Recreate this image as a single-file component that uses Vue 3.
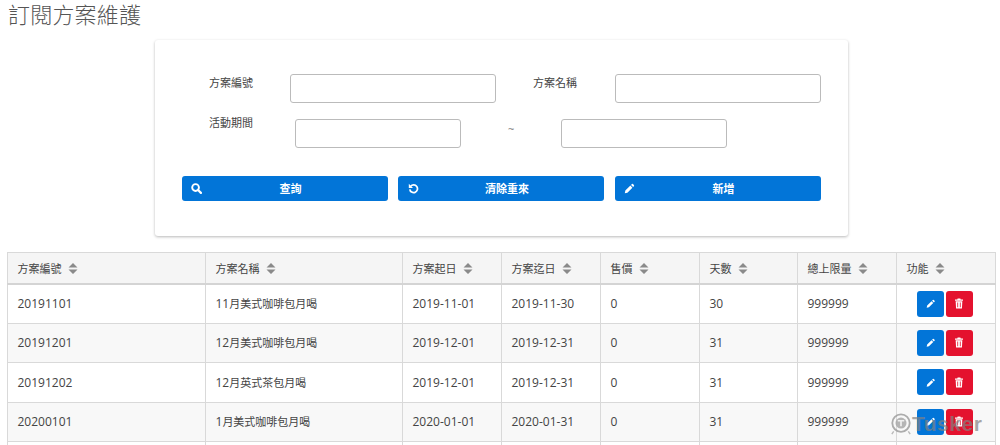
<script setup>
const columns = ['方案編號', '方案名稱', '方案起日', '方案迄日', '售價', '天數', '總上限量', '功能']
const widths = [198, 197, 99, 99, 99, 98, 99, 99]

const plans = [
  { id: '20191101', month: '11', name: '月美式咖啡包月喝', start: '2019-11-01', end: '2019-11-30', price: 0, days: 30, limit: 999999 },
  { id: '20191201', month: '12', name: '月美式咖啡包月喝', start: '2019-12-01', end: '2019-12-31', price: 0, days: 31, limit: 999999 },
  { id: '20191202', month: '12', name: '月英式茶包月喝', start: '2019-12-01', end: '2019-12-31', price: 0, days: 31, limit: 999999 },
  { id: '20200101', month: '1', name: '月美式咖啡包月喝', start: '2020-01-01', end: '2020-01-31', price: 0, days: 31, limit: 999999 },
]
const pencil = 'M1 13l.7-3.300 6.400-6.400 2.600 2.600-6.400 6.400zM9 2.400l1-1a1 1 0 0 1 1.400 0l1.200 1.200a1 1 0 0 1 0 1.400l-1 1z'
</script>

<template>
  <div class="page">
    <h1 class="title">訂閱方案維護</h1>

    <section class="card">
      <div class="row first">
        <label class="label label-a">方案編號</label>
        <input class="field wide" />
        <label class="label label-b">方案名稱</label>
        <input class="field wide" />
      </div>
      <div class="row second">
        <label class="label label-c">活動期間</label>
        <input class="field narrow" />
        <span class="tilde">~</span>
        <input class="field narrow" />
      </div>
      <div class="actions">
        <button class="btn">
          <svg class="btn-icon search" viewBox="0 0 14 14"><circle cx="5.800" cy="5.800" r="4.300" fill="none" stroke="#fff" stroke-width="2.400" /><path d="m9 9 3.600 3.600" stroke="#fff" stroke-width="2.800" stroke-linecap="round" /></svg>
          <span>查詢</span>
        </button>
        <button class="btn">
          <svg class="btn-icon" viewBox="0 0 14 14"><path d="M3.400 4.200A4.900 4.900 0 1 1 2.300 8" fill="none" stroke="#fff" stroke-width="2.200" /><path d="M1 1v5.400h5.400z" fill="#fff" /></svg>
          <span>清除重來</span>
        </button>
        <button class="btn">
          <svg class="btn-icon" viewBox="0 0 14 14"><path :d="pencil" fill="#fff" /></svg>
          <span>新增</span>
        </button>
      </div>
    </section>

    <table class="grid">
      <colgroup>
        <col v-for="(w, i) in widths" :key="i" :style="{ width: w + 'px' }" />
      </colgroup>
      <thead>
        <tr>
          <th v-for="col in columns" :key="col">
            {{ col }}
            <svg class="sort" viewBox="0 0 10 11"><path d="M5 0 9.500 4.500H.5zM5 11 .5 6.500h9z" fill="#8a8a8a" /></svg>
          </th>
        </tr>
      </thead>
      <tbody>
        <tr v-for="plan in plans" :key="plan.id">
          <td class="num">{{ plan.id }}</td>
          <td><span class="num">{{ plan.month }}</span>{{ plan.name }}</td>
          <td class="num">{{ plan.start }}</td>
          <td class="num">{{ plan.end }}</td>
          <td class="num">{{ plan.price }}</td>
          <td class="num">{{ plan.days }}</td>
          <td class="num">{{ plan.limit }}</td>
          <td class="tools">
            <button class="tool edit">
              <svg viewBox="0 0 14 14"><path :d="pencil" fill="#fff" /></svg>
            </button>
            <button class="tool remove">
              <svg class="trash" viewBox="0 0 12 15"><path d="M4 0h4l.6 1.500H12v1.700H0V1.500h3.400zM1 4.200h10L10.400 15H1.600zM3.500 6v7h1.200V6zM7.300 6v7h1.200V6z" fill="#fff" fill-rule="evenodd" /></svg>
            </button>
          </td>
        </tr>
        <tr class="empty">
          <td v-for="col in columns" :key="col"></td>
        </tr>
      </tbody>
    </table>

    <div class="watermark">
      <svg viewBox="0 0 24 24" class="mark"><circle cx="12" cy="11" r="9.500" fill="none" stroke="#9a9a9a" stroke-width="2" /><circle cx="12" cy="11" r="6" fill="#a5a5a5" /><path d="M8.500 8.500h7M12 8.500v6" stroke="#eee" stroke-width="1.800" /><path d="m4 20-2 3M20 20l2 3" stroke="#aaa" stroke-width="1.500" /></svg>
      <span>Tusker</span>
    </div>
  </div>
</template>

<style scoped>
.page {
  position: relative;
  height: 445px;
  overflow: hidden;
  background: #fff;
  color: #444;
  font-family: "Open Sans", "Noto Sans CJK TC", sans-serif;
  font-size: 11px;
}
.title {
  margin: 0;
  padding: 0 0 0 8px;
  height: 40px;
  font-size: 22px;
  letter-spacing: 0.2px;
  line-height: 28px;
  font-weight: 300;
  color: #555;
}
.card {
  box-sizing: border-box;
  width: 693px;
  height: 196px;
  margin-left: 155px;
  padding: 34px 27px 0 26px;
  border-radius: 3px;
  box-shadow: 0 1px 3px rgba(0, 0, 0, 0.28);
}
.row {
  display: flex;
  align-items: flex-start;
}
.second {
  margin-top: 16px;
}
.label {
  line-height: 16px;
  color: #444;
}
.label-a {
  width: 81px;
  padding-left: 28px;
  padding-top: 1px;
}
.label-b {
  width: 82px;
  padding-left: 37px;
  padding-top: 1px;
}
.label-c {
  width: 86px;
  padding-left: 28px;
  margin-top: -4px;
}
.field {
  box-sizing: border-box;
  height: 29px;
  padding: 0 8px;
  border: 1px solid #bbb;
  border-radius: 3px;
  background: #fff;
}
.wide {
  width: 206px;
}
.narrow {
  width: 166px;
}
.tilde {
  width: 100px;
  padding: 2px 0 0 47px;
  box-sizing: border-box;
  color: #777;
}
.actions {
  display: grid;
  grid-template-columns: 206px 206px 206px;
  column-gap: 10.500px;
  margin-top: 27.500px;
  margin-left: 0.5px;
}
.btn {
  position: relative;
  height: 25.500px;
  padding: 0 0 0 12px;
  border: 0;
  border-radius: 3px;
  background: #0275d8;
  color: #fff;
  font: inherit;
  font-weight: 700;
}
.btn-icon {
  position: absolute;
  left: 9.500px;
  top: 7.500px;
  width: 11px;
  height: 11px;
}
.grid {
  margin: 16px 0 0 7px;
  width: 988px;
  table-layout: fixed;
  border-collapse: collapse;
}
.grid th,
.grid td {
  box-sizing: border-box;
  padding: 0 9px 0 9.500px;
  border: 1px solid #d9d9d9;
  text-align: left;
  font-weight: 400;
}
.grid th {
  height: 31px;
  background: #f5f5f5;
  border-bottom: 2px solid #d4d4d4;
}
.grid td {
  height: 39.500px;
}
.grid .num {
  font-size: 12px;
}
.grid tbody tr:nth-child(even) td {
  background: #f8f8f8;
}
.sort {
  width: 10px;
  height: 11px;
  margin-left: 4px;
  vertical-align: -1px;
}
.grid .tools {
  padding-left: 20px;
  white-space: nowrap;
}
.tool {
  display: inline-flex;
  align-items: center;
  justify-content: center;
  width: 26.500px;
  height: 26px;
  padding: 0;
  margin-right: 2.500px;
  border: 0;
  border-radius: 3px;
  vertical-align: middle;
}
.tool svg {
  width: 9.500px;
  height: 9.500px;
}
.tool .trash {
  width: 8px;
  height: 11px;
}
.edit {
  background: #0275d8;
}
.remove {
  background: #e4122e;
}
.watermark {
  position: absolute;
  left: 890px;
  top: 412px;
  display: flex;
  align-items: center;
  color: rgba(130, 130, 130, 0.7);
  font-family: "Liberation Sans", sans-serif;
  font-size: 21px;
  font-weight: 700;
  letter-spacing: 0.5px;
  line-height: 24px;
}
.mark {
  width: 22px;
  height: 24px;
  opacity: 0.8;
}
</style>

<style>
html, body { margin: 0; overflow: hidden; }
</style>
